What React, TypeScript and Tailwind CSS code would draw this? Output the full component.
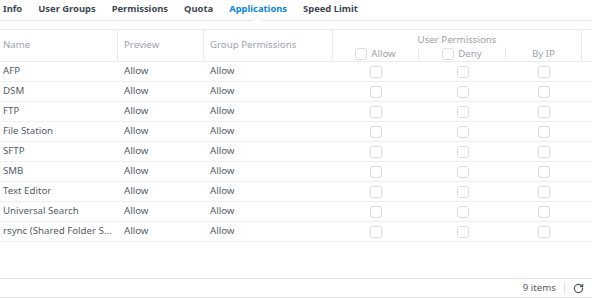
import { RotateCw } from "lucide-react";

const tabs = ["Info", "User Groups", "Permissions", "Quota", "Applications", "Speed Limit"];

const apps = [
  "AFP",
  "DSM",
  "FTP",
  "File Station",
  "SFTP",
  "SMB",
  "Text Editor",
  "Universal Search",
  "rsync (Shared Folder Sync)",
];

const cols = "grid grid-cols-[118px_86px_129px_86px_87px_76px_1fr]";

function Box() {
  return <span className="inline-block h-3 w-3 shrink-0 rounded-[3px] border border-[#d9dee4] bg-white" />;
}

export default function App() {
  return (
    <div className="flex h-[300px] w-[592px] flex-col bg-white text-[9.7px] font-['Noto_Sans',sans-serif] text-[#525d68]">
      <div className="relative flex h-[21px] items-start gap-4 border-b border-[#e3e7ec] pl-[3px] pt-[2px]">
        {tabs.map((t) => (
          <span
            key={t}
            className={`text-[9.4px] font-bold leading-[13px] ${t === "Applications" ? "text-[#0a84e0]" : "text-[#3c4650]"}`}
          >
            {t}
          </span>
        ))}
        <svg className="absolute left-[251px] top-[15px]" width="12" height="7" viewBox="0 0 12 7">
          <path d="M0 6.5 L6 0.5 L12 6.5" fill="white" stroke="#e3e7ec" />
          <rect x="0" y="6" width="12" height="2" fill="white" />
        </svg>
      </div>

      <div className="mt-2 border-t border-[#e8ebef]">
        <div className={`${cols} h-8 border-b border-[#e8ebef] text-[#9aa3ad]`}>
          <div className="flex items-center border-r border-[#e8ebef] pl-[3px]">Name</div>
          <div className="flex items-center border-r border-[#e8ebef] pl-[6px]">Preview</div>
          <div className="flex items-center border-r border-[#e8ebef] pl-[6px]">Group Permissions</div>
          <div className="col-span-3 flex flex-col border-r border-[#e8ebef]">
            <div className="flex h-4 items-end justify-center leading-[13px]">User Permissions</div>
            <div className="grid flex-1 grid-cols-[86px_87px_1fr] items-center">
              <div className="flex items-center justify-center gap-1 border-r border-[#e8ebef] leading-[11px]">
                <Box />
                <span>Allow</span>
              </div>
              <div className="flex items-center justify-center gap-1 border-r border-[#e8ebef] leading-[11px]">
                <Box />
                <span>Deny</span>
              </div>
              <div className="flex items-center justify-center leading-[11px]">By IP</div>
            </div>
          </div>
          <div />
        </div>

        {apps.map((a) => (
          <div key={a} className={`${cols} h-5 items-center border-b border-[#eceff3]`}>
            <div className="truncate pl-[3px] pr-[3px]">{a}</div>
            <div className="pl-[6px]">Allow</div>
            <div className="pl-[6px]">Allow</div>
            <div className="flex justify-center"><Box /></div>
            <div className="flex justify-center"><Box /></div>
            <div className="flex justify-center"><Box /></div>
            <div />
          </div>
        ))}
      </div>

      <div className="flex-1" />

      <div className="mb-[2px] flex h-5 items-center justify-end border-y border-[#e3e7ec] pr-[8px]">
        <span>9 items</span>
        <span className="mx-2 h-3 border-l border-[#dde2e7]" />
        <RotateCw size={11} strokeWidth={2.75} className="text-[#4f5a65]" />
      </div>
    </div>
  );
}
